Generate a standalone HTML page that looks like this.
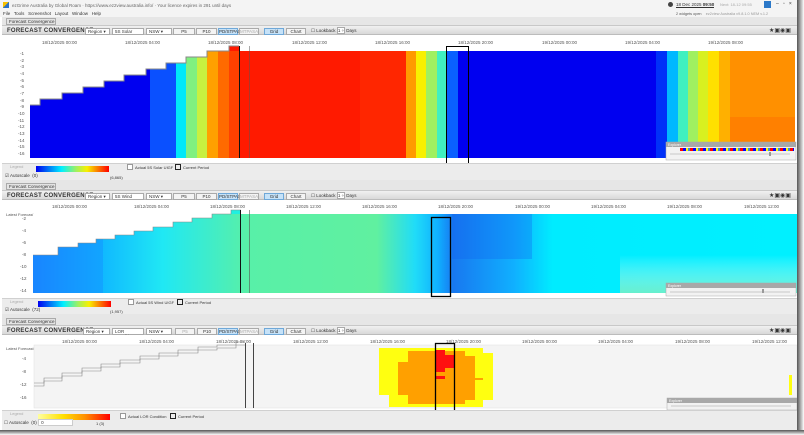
<!DOCTYPE html>
<html><head><meta charset="utf-8"><style>
*{margin:0;padding:0;box-sizing:border-box}
body{width:804px;height:435px;overflow:hidden;background:#fff;font-family:"Liberation Sans",sans-serif;font-size:5px;color:#333;position:relative}
.a{position:absolute;white-space:nowrap}
.tb{position:absolute;left:2px;width:795px;height:10px;background:linear-gradient(#f0f0f0,#d8d8d8);border-top:1px solid #c8c8c8;border-bottom:1px solid #bcbcbc}
.tt{position:absolute;left:5px;top:1.5px;font-weight:bold;font-size:6px;color:#333;letter-spacing:.25px}
.dd{position:absolute;top:1.5px;height:7px;background:#fff;border:1px solid #aaa;font-size:4.5px;padding-left:2px;line-height:5px}
.bt{position:absolute;top:1.5px;height:7px;background:#f4f4f4;border:1px solid #aaa;font-size:4.5px;text-align:center;line-height:5px}
.bl{background:#c6e2f8;border-color:#6fa8d8}
.tab{position:absolute;left:6px;width:50px;height:7px;background:#e4e4e4;border:1px solid #aaa;font-size:4.5px;padding-left:2px;line-height:5px}
.leg{position:absolute;left:2px;width:795px;background:#ececec;border-top:1px solid #d0d0d0}
</style></head><body>
<div class="a" style="left:0;top:0;width:804px;height:17px;background:#f4f4f4"></div>
<div class="a" style="left:3px;top:2px;width:6px;height:6px;background:linear-gradient(135deg,#f6c000 50%,#2a70c8 50%)"></div>
<div class="a" style="left:12px;top:3px;font-size:4.5px;color:#666">ezGrime Australia by Global Roam · https://www.ez2view.australia.info/ · Your licence expires in 291 until days</div>
<div class="a" style="left:3px;top:11px;font-size:4.5px;color:#333">File &nbsp; Tools &nbsp; Screenshot &nbsp; Layout &nbsp; Window &nbsp; Help</div>
<div class="a" style="left:668px;top:2px;width:5px;height:5px;border-radius:50%;background:#444"></div>
<div class="a" style="left:676px;top:2px;font-size:4.5px;color:#333;border-bottom:1px solid #333">18 Dec 2025 <b>09:50</b></div>
<div class="a" style="left:720px;top:2px;font-size:4px;color:#aaa">Next: 18-12 09:55</div>
<div class="a" style="left:764px;top:1px;width:7px;height:7px;background:#2b78c8"></div>
<div class="a" style="left:776px;top:1px;font-size:5px;color:#333">–&nbsp;&nbsp; ▫ &nbsp; ×</div>
<div class="a" style="left:676px;top:12px;font-size:3.8px;color:#555">2 widgets open &nbsp;&nbsp; <span style="color:#999">ez2view Australia v9.8.1.0 NEM v.1.2</span></div>
<div class="a" style="left:2px;top:17px;width:795px;height:8px;background:#e6e6e6"></div>
<div class="tab" style="top:18px">Forecast Convergence &nbsp;&nbsp;&nbsp;&nbsp;&nbsp;× ▾</div>

<div class="tb" style="top:25px">
<div class="tt">FORECAST CONVERGENCE</div>
<div class="dd" style="left:83px;width:25px">Region ▾</div>
<div class="dd" style="left:110px;width:32px">5S Solar UIGF ▾</div>
<div class="dd" style="left:144px;width:26px">NSW ▾</div>
<div class="bt" style="left:171px;width:22px">P5</div>
<div class="bt" style="left:194px;width:21px">P10</div>
<div class="bt bl" style="left:216px;width:20px">PD/STPASA</div>
<div class="bt" style="left:237px;width:20px;color:#aaa">MTPASA</div>
<div class="bt bl" style="left:262px;width:20px">Grid</div>
<div class="bt" style="left:284px;width:20px">Chart</div>
<div class="a" style="left:309px;top:2px;font-size:4.5px">☐ Lookback <span style="border:1px solid #aaa;background:#fff">1 ÷</span> Days</div>
<div class="a" style="left:767px;top:1px;font-size:6px">★▣◉▣</div>
</div>
<div class="a" style="left:2px;top:35px;width:795px;height:128px;background:#fff"></div>
<div class="a" style="left:42px;top:40px;font-size:4.5px;color:#555">18/12/2025 00:00</div>
<div class="a" style="left:125px;top:40px;font-size:4.5px;color:#555">18/12/2025 04:00</div>
<div class="a" style="left:208px;top:40px;font-size:4.5px;color:#555">18/12/2025 08:00</div>
<div class="a" style="left:292px;top:40px;font-size:4.5px;color:#555">18/12/2025 12:00</div>
<div class="a" style="left:375px;top:40px;font-size:4.5px;color:#555">18/12/2025 16:00</div>
<div class="a" style="left:458px;top:40px;font-size:4.5px;color:#555">18/12/2025 20:00</div>
<div class="a" style="left:542px;top:40px;font-size:4.5px;color:#555">19/12/2025 00:00</div>
<div class="a" style="left:625px;top:40px;font-size:4.5px;color:#555">19/12/2025 04:00</div>
<div class="a" style="left:708px;top:40px;font-size:4.5px;color:#555">19/12/2025 08:00</div>
<svg class="a" style="left:0;top:0" width="804" height="435">
<g shape-rendering="crispEdges">
<rect x="30" y="51" width="146" height="107" fill="#0000f0"/>
<rect x="150" y="51" width="26" height="107" fill="#0a50ff"/>
<rect x="176" y="51" width="10" height="107" fill="#00e8f8"/>
<rect x="186" y="51" width="11" height="107" fill="#80f080"/>
<rect x="197" y="51" width="10" height="107" fill="#c8f040"/>
<rect x="207" y="51" width="11" height="107" fill="#ffa000"/>
<rect x="218" y="51" width="11" height="107" fill="#ff6a00"/>
<rect x="229" y="51" width="10" height="107" fill="#ff4000"/>
<rect x="239" y="51" width="167" height="107" fill="#ff1a00"/>
<rect x="360" y="51" width="46" height="107" fill="#ff2e00" opacity=".6"/>
<rect x="406" y="51" width="10" height="107" fill="#ff9a00"/>
<rect x="416" y="51" width="10" height="107" fill="#f8f000"/>
<rect x="426" y="51" width="11" height="107" fill="#a0f060"/>
<rect x="437" y="51" width="10" height="107" fill="#40f0c0"/>
<rect x="447" y="51" width="11" height="107" fill="#0a60ff"/>
<rect x="458" y="51" width="209" height="107" fill="#0000f0"/>
<rect x="656" y="51" width="11" height="107" fill="#0030f8"/>
<rect x="667" y="51" width="11" height="107" fill="#00b8ff"/>
<rect x="678" y="51" width="10" height="107" fill="#40f0c0"/>
<rect x="688" y="51" width="10" height="107" fill="#a0f060"/>
<rect x="698" y="51" width="10" height="107" fill="#d8f020"/>
<rect x="708" y="51" width="11" height="107" fill="#ffe000"/>
<rect x="719" y="51" width="11" height="107" fill="#ffb000"/>
<rect x="730" y="51" width="65" height="107" fill="#ff9000"/>
<rect x="730" y="117" width="65" height="41" fill="#ff8000"/>
<rect x="229" y="46" width="10" height="5" fill="#ff1a00"/>
<path d="M30,51 L30,105 L40,105 L40,99 L62,99 L62,93 L83,93 L83,87 L104,87 L104,81 L124,81 L124,75 L146,75 L146,69 L166,69 L166,63 L186,63 L186,57 L207,57 L207,51 Z" fill="#fff"/>
<path d="M30,105 L40,105 L40,99 L62,99 L62,93 L83,93 L83,87 L104,87 L104,81 L124,81 L124,75 L146,75 L146,69 L166,69 L166,63 L186,63 L186,57 L207,57 L207,51 L229,51 L229,46 L239,46" fill="none" stroke="#888" stroke-width=".6"/>
<rect x="239" y="46" width="1" height="112" fill="#111"/>
<rect x="249" y="46" width=".6" height="112" fill="#555"/>
<rect x="446.5" y="46.5" width="22" height="119" fill="none" stroke="#000" stroke-width="1.3"/>
</g>
<g font-size="4.5" fill="#555" font-family="Liberation Sans">
<text x="20" y="55">-1</text><text x="20" y="62">-2</text><text x="20" y="68">-3</text><text x="20" y="75">-4</text><text x="20" y="82">-5</text><text x="20" y="88">-6</text><text x="20" y="95">-7</text><text x="20" y="102">-8</text><text x="20" y="108">-9</text><text x="18" y="115">-10</text><text x="18" y="122">-11</text><text x="18" y="128">-12</text><text x="18" y="135">-13</text><text x="18" y="142">-14</text><text x="18" y="148">-15</text><text x="18" y="155">-16</text>
</g>
<rect x="666" y="142" width="130" height="18" fill="#f2f2f2" stroke="#aaa" stroke-width=".5"/>
<rect x="666" y="142" width="130" height="5" fill="#a8a8a8"/>
<text x="668" y="146" font-size="3.5" fill="#fff">Explorer</text>
<rect x="680" y="148" width="114" height="3" fill="#48c"/>
<rect x="680" y="148" width="114" height="3" fill="url(#st)"/>
<rect x="670" y="153" width="120" height="2" fill="#ddd"/>
<rect x="769" y="152" width="2" height="4" fill="#999"/>
<defs><pattern id="st" width="10" height="3" patternUnits="userSpaceOnUse"><rect width="3" height="3" fill="#f00"/><rect x="3" width="3" height="3" fill="#00f"/><rect x="6" width="2" height="3" fill="#ff0"/></pattern></defs>
</svg>
<div class="leg" style="top:163px;height:17px"></div>
<div class="a" style="left:10px;top:164px;font-size:4px;color:#aaa">Legend</div>
<div class="a" style="left:36px;top:166px;width:73px;height:6px;background:linear-gradient(90deg,#0000f0,#00f0ff 35%,#a0f060 55%,#f8f000 70%,#ff0000)"></div>
<div class="a" style="left:5px;top:173px;font-size:4.5px">☑ Autoscale &nbsp;(0)</div>
<div class="a" style="left:110px;top:175px;font-size:4px">(6,865)</div>
<div class="a" style="left:127px;top:164px;width:6px;height:6px;border:1px solid #999;background:#fff"></div>
<div class="a" style="left:135px;top:165px;font-size:4px">Actual 5S Solar UIGF</div>
<div class="a" style="left:175px;top:164px;width:6px;height:6px;border:1.3px solid #222"></div>
<div class="a" style="left:183px;top:165px;font-size:4px">Current Period</div>

<div class="a" style="left:2px;top:180px;width:795px;height:10px;background:#e6e6e6"></div>
<div class="tab" style="top:183px">Forecast Convergence &nbsp;&nbsp;&nbsp;&nbsp;&nbsp;× ▾</div>
<div class="tb" style="top:190px">
<div class="tt">FORECAST CONVERGENCE</div>
<div class="dd" style="left:83px;width:25px">Region ▾</div>
<div class="dd" style="left:110px;width:32px">5S Wind UIGF ▾</div>
<div class="dd" style="left:144px;width:26px">NSW ▾</div>
<div class="bt" style="left:171px;width:22px">P5</div>
<div class="bt" style="left:194px;width:21px">P10</div>
<div class="bt bl" style="left:216px;width:20px">PD/STPASA</div>
<div class="bt" style="left:237px;width:20px;color:#aaa">MTPASA</div>
<div class="bt bl" style="left:262px;width:20px">Grid</div>
<div class="bt" style="left:284px;width:20px">Chart</div>
<div class="a" style="left:309px;top:2px;font-size:4.5px">☐ Lookback <span style="border:1px solid #aaa;background:#fff">1 ÷</span> Days</div>
<div class="a" style="left:767px;top:1px;font-size:6px">★▣◉▣</div>
</div>
<div class="a" style="left:2px;top:200px;width:795px;height:98px;background:#fff"></div>
<div class="a" style="left:52px;top:204px;font-size:4.5px;color:#555">18/12/2025 00:00</div>
<div class="a" style="left:134px;top:204px;font-size:4.5px;color:#555">18/12/2025 04:00</div>
<div class="a" style="left:210px;top:204px;font-size:4.5px;color:#555">18/12/2025 08:00</div>
<div class="a" style="left:286px;top:204px;font-size:4.5px;color:#555">18/12/2025 12:00</div>
<div class="a" style="left:362px;top:204px;font-size:4.5px;color:#555">18/12/2025 16:00</div>
<div class="a" style="left:438px;top:204px;font-size:4.5px;color:#555">18/12/2025 20:00</div>
<div class="a" style="left:515px;top:204px;font-size:4.5px;color:#555">19/12/2025 00:00</div>
<div class="a" style="left:591px;top:204px;font-size:4.5px;color:#555">19/12/2025 04:00</div>
<div class="a" style="left:667px;top:204px;font-size:4.5px;color:#555">19/12/2025 08:00</div>
<div class="a" style="left:744px;top:204px;font-size:4.5px;color:#555">19/12/2025 12:00</div>
<div class="a" style="left:6px;top:212px;font-size:4px;color:#555">Latest Forecast</div>
<svg class="a" style="left:0;top:0" width="804" height="435">
<defs>
<linearGradient id="w2" x1="0" x2="1"><stop offset="0" stop-color="#1a88ff"/><stop offset=".09" stop-color="#10b8ff"/><stop offset=".17" stop-color="#20e8f4"/><stop offset=".28" stop-color="#58f0a8"/><stop offset=".45" stop-color="#60f0a0"/><stop offset=".5" stop-color="#20dcf8"/><stop offset=".53" stop-color="#10b0ff"/><stop offset=".55" stop-color="#1878f0"/><stop offset=".63" stop-color="#10b0ff"/><stop offset=".68" stop-color="#00ecff"/><stop offset="1" stop-color="#00f0ff"/></linearGradient>
<linearGradient id="w2b" x1="0" x2="0" y1="0" y2="1"><stop offset="0" stop-color="#fff" stop-opacity="0"/><stop offset="1" stop-color="#80f0c0" stop-opacity=".8"/></linearGradient>
</defs>
<rect x="33" y="214" width="764" height="79" fill="url(#w2)"/>
<rect x="33" y="230" width="70" height="63" fill="#1880ff" opacity=".35"/>
<rect x="452" y="214" width="80" height="45" fill="#1060f0" opacity=".3"/>
<rect x="620" y="255" width="177" height="38" fill="url(#w2b)"/>
<path d="M33,214 L33,255 L58,255 L58,247 L78,247 L78,243 L96,243 L96,239 L115,239 L115,235 L134,235 L134,231 L153,231 L153,227 L173,227 L173,222 L192,222 L192,218 L212,218 L212,214 Z" fill="#fff"/>
<rect x="231" y="210" width="10" height="4" fill="#20f0e0"/>
<path d="M33,255 L58,255 L58,247 L78,247 L78,243 L96,243 L96,239 L115,239 L115,235 L134,235 L134,231 L153,231 L153,227 L173,227 L173,222 L192,222 L192,218 L212,218 L212,214 L231,214 L231,210 L241,210" fill="none" stroke="#888" stroke-width=".6"/>
<rect x="240" y="210" width="1" height="83" fill="#111"/>
<rect x="249" y="210" width=".6" height="83" fill="#555"/>
<rect x="431.5" y="217.5" width="19" height="79" fill="none" stroke="#000" stroke-width="1.3"/>
<g font-size="4.5" fill="#555"><text x="22" y="220">-2</text><text x="22" y="232">-4</text><text x="22" y="244">-6</text><text x="22" y="256">-8</text><text x="20" y="268">-10</text><text x="20" y="280">-12</text><text x="20" y="292">-14</text></g>
<rect x="666" y="283" width="130" height="13" fill="#f2f2f2" stroke="#aaa" stroke-width=".5"/>
<rect x="666" y="283" width="130" height="5" fill="#a8a8a8"/>
<text x="668" y="287" font-size="3.5" fill="#fff">Explorer</text>
<rect x="670" y="291" width="120" height="2" fill="#ddd"/>
<rect x="762" y="289" width="2" height="4" fill="#999"/>
</svg>
<div class="leg" style="top:298px;height:16px"></div>
<div class="a" style="left:10px;top:299px;font-size:4px;color:#aaa">Legend</div>
<div class="a" style="left:38px;top:301px;width:73px;height:6px;background:linear-gradient(90deg,#0000f0,#00f0ff 35%,#a0f060 55%,#f8f000 70%,#ff0000)"></div>
<div class="a" style="left:5px;top:307px;font-size:4.5px">☑ Autoscale &nbsp;(72)</div>
<div class="a" style="left:110px;top:309px;font-size:4px">(1,957)</div>
<div class="a" style="left:128px;top:299px;width:6px;height:6px;border:1px solid #999;background:#fff"></div>
<div class="a" style="left:136px;top:300px;font-size:4px">Actual 5S Wind UIGF</div>
<div class="a" style="left:177px;top:299px;width:6px;height:6px;border:1.3px solid #222"></div>
<div class="a" style="left:185px;top:300px;font-size:4px">Current Period</div>

<div class="a" style="left:2px;top:314px;width:795px;height:11px;background:#e6e6e6"></div>
<div class="tab" style="top:318px">Forecast Convergence &nbsp;&nbsp;&nbsp;&nbsp;&nbsp;× ▾</div>
<div class="tb" style="top:325px">
<div class="tt">FORECAST CONVERGENCE</div>
<div class="dd" style="left:81px;width:27px">Region ▾</div>
<div class="dd" style="left:110px;width:32px">LOR Condition ▾</div>
<div class="dd" style="left:144px;width:26px">NSW ▾</div>
<div class="bt" style="left:173px;width:20px;color:#aaa">P5</div>
<div class="bt" style="left:195px;width:20px">P10</div>
<div class="bt bl" style="left:216px;width:20px">PD/STPASA</div>
<div class="bt" style="left:237px;width:20px;color:#aaa">MTPASA</div>
<div class="bt bl" style="left:262px;width:20px">Grid</div>
<div class="bt" style="left:284px;width:20px">Chart</div>
<div class="a" style="left:309px;top:2px;font-size:4.5px">☐ Lookback <span style="border:1px solid #aaa;background:#fff">1 ÷</span> Days</div>
<div class="a" style="left:767px;top:1px;font-size:6px">★▣◉▣</div>
</div>
<div class="a" style="left:2px;top:335px;width:795px;height:75px;background:#fff"></div>
<div class="a" style="left:62px;top:339px;font-size:4.5px;color:#555">18/12/2025 00:00</div>
<div class="a" style="left:139px;top:339px;font-size:4.5px;color:#555">18/12/2025 04:00</div>
<div class="a" style="left:216px;top:339px;font-size:4.5px;color:#555">18/12/2025 08:00</div>
<div class="a" style="left:293px;top:339px;font-size:4.5px;color:#555">18/12/2025 12:00</div>
<div class="a" style="left:370px;top:339px;font-size:4.5px;color:#555">18/12/2025 16:00</div>
<div class="a" style="left:446px;top:339px;font-size:4.5px;color:#555">18/12/2025 20:00</div>
<div class="a" style="left:522px;top:339px;font-size:4.5px;color:#555">19/12/2025 00:00</div>
<div class="a" style="left:598px;top:339px;font-size:4.5px;color:#555">19/12/2025 04:00</div>
<div class="a" style="left:675px;top:339px;font-size:4.5px;color:#555">19/12/2025 08:00</div>
<div class="a" style="left:752px;top:339px;font-size:4.5px;color:#555">19/12/2025 12:00</div>
<div class="a" style="left:6px;top:346px;font-size:4px;color:#555">Latest Forecast</div>
<svg class="a" style="left:0;top:0" width="804" height="435">
<rect x="34" y="345" width="763" height="63" fill="#f4f4f4" stroke="#e0e0e0" stroke-width=".5"/>
<path d="M34,383 L44,383 L44,378 L62,378 L62,373 L82,373 L82,368 L101,368 L101,364 L120,364 L120,360 L140,360 L140,356 L159,356 L159,353 L178,353 L178,350 L198,350 L198,347 L217,347 L217,345 L236,345 L236,342 L245,342" fill="none" stroke="#888" stroke-width=".6"/>
<path d="M34,386 L44,386 L44,381 L62,381 L62,376 L82,376 L82,371 L101,371 L101,367 L120,367 L120,363 L140,363 L140,359 L159,359 L159,356 L178,356 L178,353 L198,353 L198,350 L217,350 L217,348 L236,348 L236,345 L245,345" fill="none" stroke="#888" stroke-width=".6"/>
<rect x="245" y="343" width="1" height="65" fill="#444"/>
<rect x="253" y="343" width="1" height="65" fill="#444"/>
<path d="M389,348 L483,348 L483,353 L493,353 L493,400 L483,400 L483,407 L389,407 L389,395 L379,395 L379,348 Z" fill="#ffff10"/>
<path d="M408,351 L465,351 L465,356 L475,356 L475,400 L465,400 L465,404 L408,404 L408,395 L398,395 L398,362 L408,362 Z" fill="#ffa000"/>
<rect x="475" y="378" width="8" height="2" fill="#ffa000"/>
<path d="M436,350 L445,350 L445,355 L454,355 L454,368 L445,368 L445,372 L436,372 Z" fill="#ff1010"/>
<rect x="436" y="376" width="9" height="3" fill="#ff1010"/>
<rect x="789" y="375" width="3" height="20" fill="#ffff10"/>
<rect x="435.5" y="343.5" width="19" height="68" fill="none" stroke="#000" stroke-width="1.3"/>
<g font-size="4.5" fill="#555"><text x="22" y="360">-4</text><text x="22" y="373">-8</text><text x="20" y="386">-12</text><text x="20" y="399">-16</text></g>
<rect x="667" y="398" width="130" height="12" fill="#f2f2f2" stroke="#aaa" stroke-width=".5"/>
<rect x="667" y="398" width="130" height="5" fill="#a8a8a8"/>
<text x="669" y="402" font-size="3.5" fill="#fff">Explorer</text>
<rect x="671" y="405" width="120" height="2" fill="#ddd"/>
</svg>
<div class="leg" style="top:410px;height:20px"></div>
<div class="a" style="left:10px;top:411px;font-size:4px;color:#aaa">Legend</div>
<div class="a" style="left:38px;top:414px;width:72px;height:6px;background:linear-gradient(90deg,#ffffa0,#ffe000 35%,#ff9000 65%,#ff0000)"></div>
<div class="a" style="left:4px;top:420px;font-size:4.5px">☐ Autoscale &nbsp;(0) <span style="background:#fff;border:1px solid #ccc;padding:0 28px 0 2px">0</span></div>
<div class="a" style="left:96px;top:421px;font-size:4px">1 (3)</div>
<div class="a" style="left:120px;top:413px;width:6px;height:6px;border:1px solid #999;background:#fff"></div>
<div class="a" style="left:128px;top:414px;font-size:4px">Actual LOR Condition</div>
<div class="a" style="left:170px;top:413px;width:6px;height:6px;border:1.3px solid #222"></div>
<div class="a" style="left:178px;top:414px;font-size:4px">Current Period</div>
<div class="a" style="left:797px;top:0;width:7px;height:435px;background:linear-gradient(90deg,#555,#fff)"></div>
<div class="a" style="left:0;top:430px;width:804px;height:5px;background:linear-gradient(#555,#fff)"></div>
</body></html>
